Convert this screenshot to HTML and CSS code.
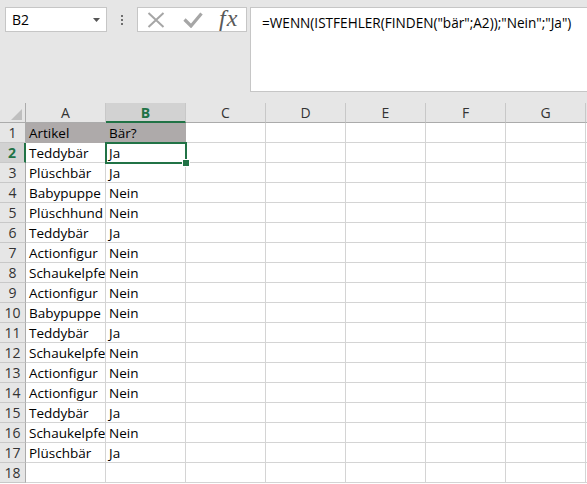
FILE: index.html
```html
<!DOCTYPE html>
<html lang="de">
<head>
<meta charset="utf-8">
<title>Excel</title>
<link rel="stylesheet" href="styles.css">
</head>
<body>
<div class="toolbar">
  <div class="namebox"><span>B2</span><svg class="arrow" width="7" height="4" viewBox="0 0 7 4"><path d="M0 0H7L3.5 4Z" fill="#555"/></svg></div>
  <div class="dots"><i></i><i></i><i></i></div>
  <div class="fxbox">
    <svg class="ico-x" width="18" height="16" viewBox="0 0 18 16"><path d="M1.5 1L16.5 15M16.5 1L1.5 15" stroke="#a6a6a6" stroke-width="2" fill="none"/></svg>
    <svg class="ico-check" width="20" height="16" viewBox="0 0 20 16"><path d="M1.5 7.5L8 14L18.5 1.5" stroke="#a6a6a6" stroke-width="3.2" fill="none"/></svg>
    <span class="fx">fx</span>
  </div>
  <div class="formula">=WENN(ISTFEHLER(FINDEN("bär";A2));"Nein";"Ja")</div>
</div>
<div class="sheet">
  <div class="row hrow">
    <div class="corner"><svg width="11" height="11" viewBox="0 0 11 11"><path d="M11 0V11H0Z" fill="#bfbfbf"/></svg></div>
    <div class="ch">A</div><div class="ch selh">B</div><div class="ch">C</div><div class="ch">D</div><div class="ch">E</div><div class="ch">F</div><div class="ch">G</div><div class="ch"></div>
  </div>
  <div class="row"><div class="rh">1</div><div class="c fill">Artikel</div><div class="c fill">Bär?</div><div class="rest"></div></div>
  <div class="row"><div class="rh selr">2</div><div class="c">Teddybär</div><div class="c sel">Ja</div><div class="rest"></div></div>
  <div class="row"><div class="rh">3</div><div class="c">Plüschbär</div><div class="c">Ja</div><div class="rest"></div></div>
  <div class="row"><div class="rh">4</div><div class="c">Babypuppe</div><div class="c">Nein</div><div class="rest"></div></div>
  <div class="row"><div class="rh">5</div><div class="c">Plüschhund</div><div class="c">Nein</div><div class="rest"></div></div>
  <div class="row"><div class="rh">6</div><div class="c">Teddybär</div><div class="c">Ja</div><div class="rest"></div></div>
  <div class="row"><div class="rh">7</div><div class="c">Actionfigur</div><div class="c">Nein</div><div class="rest"></div></div>
  <div class="row"><div class="rh">8</div><div class="c">Schaukelpferd</div><div class="c">Nein</div><div class="rest"></div></div>
  <div class="row"><div class="rh">9</div><div class="c">Actionfigur</div><div class="c">Nein</div><div class="rest"></div></div>
  <div class="row"><div class="rh">10</div><div class="c">Babypuppe</div><div class="c">Nein</div><div class="rest"></div></div>
  <div class="row"><div class="rh">11</div><div class="c">Teddybär</div><div class="c">Ja</div><div class="rest"></div></div>
  <div class="row"><div class="rh">12</div><div class="c">Schaukelpferd</div><div class="c">Nein</div><div class="rest"></div></div>
  <div class="row"><div class="rh">13</div><div class="c">Actionfigur</div><div class="c">Nein</div><div class="rest"></div></div>
  <div class="row"><div class="rh">14</div><div class="c">Actionfigur</div><div class="c">Nein</div><div class="rest"></div></div>
  <div class="row"><div class="rh">15</div><div class="c">Teddybär</div><div class="c">Ja</div><div class="rest"></div></div>
  <div class="row"><div class="rh">16</div><div class="c">Schaukelpferd</div><div class="c">Nein</div><div class="rest"></div></div>
  <div class="row"><div class="rh">17</div><div class="c">Plüschbär</div><div class="c">Ja</div><div class="rest"></div></div>
  <div class="row"><div class="rh">18</div><div class="c"></div><div class="c"></div><div class="rest"></div></div>
</div>
</body>
</html>
```
FILE: styles.css
```css
*, *::before, *::after { box-sizing: border-box; }
html, body { margin: 0; padding: 0; }
body {
  width: 587px;
  height: 484px;
  overflow: hidden;
  background: #ffffff;
  font-family: "Open Sans", "Noto Sans", sans-serif;
  color: #000;
}
.toolbar {
  height: 103px;
  background: #e6e6e6;
  display: flex;
  align-items: flex-start;
  padding: 7px 0 0 5px;
}
.namebox {
  width: 102px;
  height: 25px;
  background: #fff;
  border: 1px solid #c6c6c6;
  display: flex;
  align-items: center;
  justify-content: space-between;
  padding: 0 6px;
  font-size: 14px;
  color: #000;
}
.dots {
  width: 30px;
  height: 25px;
  display: flex;
  flex-direction: column;
  align-items: center;
  justify-content: center;
  gap: 2px;
}
.dots i {
  display: block;
  width: 2px;
  height: 2px;
  background: #6e6e6e;
}
.fxbox {
  width: 110px;
  height: 25px;
  background: #fff;
  border: 1px solid #c6c6c6;
  display: flex;
  align-items: center;
  padding-left: 9px;
}
.ico-x { margin-right: 18px; }
.ico-check { margin-right: 16px; }
.fx {
  font-family: "Liberation Serif", "DejaVu Serif", serif;
  font-style: italic;
  font-size: 24px;
  color: #595959;
  line-height: 1;
  margin-top: -3px;
  letter-spacing: 1px;
}
.formula {
  flex: 1;
  height: 85px;
  margin-left: 3px;
  margin-right: -2px;
  background: #fff;
  border: 1px solid #c6c6c6;
  padding: 5px 11px;
  font-size: 13.6px;
  line-height: 20px;
  white-space: nowrap;
  color: #000;
}
.sheet {
  width: 587px;
  overflow: hidden;
}
.row {
  display: flex;
  height: 20px;
}
.corner {
  flex: 0 0 26px;
  height: 20px;
  background: #e6e6e6;
  border-right: 1px solid #ababab;
  border-bottom: 1px solid #ababab;
  display: flex;
  align-items: flex-end;
  justify-content: flex-end;
  padding: 0 3px 2px 0;
}
.ch {
  flex: 0 0 80px;
  height: 20px;
  background: #e6e6e6;
  border-right: 1px solid #c8c8c8;
  border-bottom: 1px solid #ababab;
  text-align: center;
  font-size: 14px;
  line-height: 19px;
  color: #333;
}
.ch.selh {
  background: #d2d2d2;
  color: #217346;
  font-weight: bold;
  border-bottom: 2px solid #217346;
}
.rh {
  flex: 0 0 26px;
  height: 20px;
  background: #e6e6e6;
  border-right: 1px solid #ababab;
  border-bottom: 1px solid #c8c8c8;
  text-align: center;
  font-size: 14px;
  line-height: 20px;
  color: #333;
}
.rh.selr {
  background: #d2d2d2;
  color: #217346;
  font-weight: bold;
  border-right: 2px solid #217346;
}
.c {
  flex: 0 0 80px;
  height: 20px;
  border-right: 1px solid #d4d4d4;
  border-bottom: 1px solid #d4d4d4;
  padding-left: 3px;
  font-size: 13.5px;
  line-height: 21px;
  white-space: nowrap;
  overflow: hidden;
}
.c.fill {
  background: #aeaaaa;
  border-color: #aeaaaa;
}
.c.sel {
  position: relative;
  overflow: visible;
}
.c.sel::before {
  content: "";
  position: absolute;
  left: -1px;
  top: -1px;
  width: 82px;
  height: 22px;
  border: 2px solid #217346;
  z-index: 2;
}
.c.sel::after {
  content: "";
  position: absolute;
  left: 76px;
  top: 16px;
  width: 8px;
  height: 8px;
  background: #217346;
  border: 1px solid #fff;
  z-index: 3;
}
.rest {
  flex: 1 0 auto;
  height: 20px;
  border-bottom: 1px solid #d4d4d4;
  background-image: linear-gradient(to right, transparent 79px, #d4d4d4 79px);
  background-size: 80px 100%;
  background-repeat: repeat-x;
}
```
